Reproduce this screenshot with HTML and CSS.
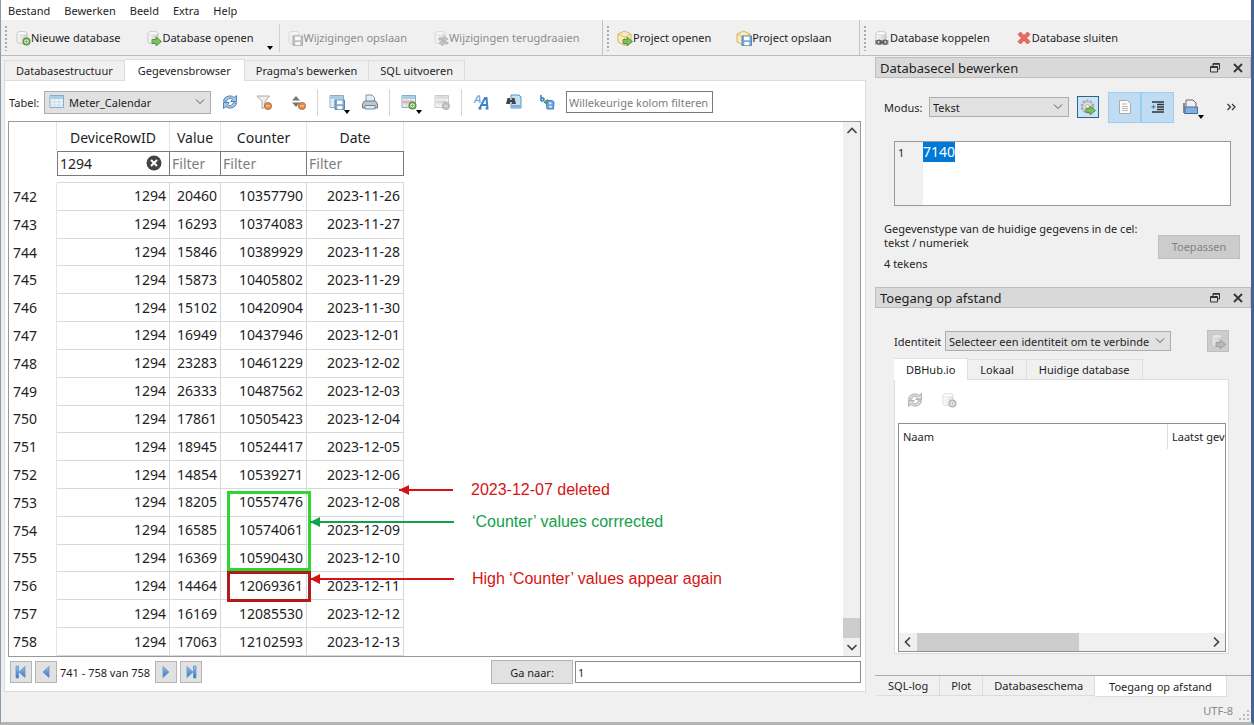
FILE: index.html
```html
<!DOCTYPE html>
<html lang="nl">
<head>
    <meta charset="UTF-8">
    <title>DB Browser for SQLite</title>
    <link rel="stylesheet" href="styles.css">
</head>
<body>
    <!-- icon sprite -->
    <svg class="sprite" aria-hidden="true">
        <defs>
            <linearGradient id="gBlue" x1="0" y1="0" x2="0" y2="1"><stop offset="0" stop-color="#9cc4ee"/><stop offset="1" stop-color="#2f6fc0"/></linearGradient>
            <linearGradient id="gCyl" x1="0" y1="0" x2="1" y2="0"><stop offset="0" stop-color="#fafafa"/><stop offset="1" stop-color="#cfcfcf"/></linearGradient>
        </defs>
        <symbol id="cyl" viewBox="0 0 16 16"><path d="M2 3.2C2 1 12 1 12 3.2V12c0 2.2-10 2.2-10 0z" fill="url(#gCyl)" stroke="#bdbdbd" stroke-width=".8"/><ellipse cx="7" cy="3.3" rx="4.8" ry="1.6" fill="#fff" stroke="#c8c8c8" stroke-width=".6"/></symbol>
        <symbol id="plus" viewBox="0 0 16 16"><circle cx="11.5" cy="11.5" r="3.2" fill="#eef7e8" stroke="#5b9a45" stroke-width="1.7"/><path d="M11.5 9.8v3.4M9.8 11.5h3.4" stroke="#7fb56a" stroke-width="1"/></symbol>
        <symbol id="arrow" viewBox="0 0 16 16"><path d="M6 9.5h4V7l5.5 4.5L10 16v-2.5H6z" fill="#7fc05e" stroke="#4c8f3a" stroke-width=".9"/></symbol>
        <symbol id="floppy" viewBox="0 0 16 16"><path d="M6 6h9.5v9.5H6z" fill="#7da7d4" stroke="#5d86b3"/><path d="M8 6.5h5.5v3.7H8zM8.3 12h5v3.3h-5z" fill="#fff"/></symbol>
        <symbol id="minus" viewBox="0 0 16 16"><circle cx="12" cy="12" r="3.6" fill="#e08a4c" stroke="#b3683a" stroke-width=".8"/><path d="M10 12h4" stroke="#fbd9bd"/></symbol>
        <symbol id="box" viewBox="0 0 16 16"><path d="M7.5 1l6.5 3v8l-6.5 3.5L1 12V4z" fill="#f8ecc0" stroke="#cfae55" stroke-width=".9"/><path d="M1 4l6.500 3L14 4M7.500 7v8.500" fill="none" stroke="#d8bc6a" stroke-width=".9"/></symbol>
        <symbol id="grid" viewBox="0 0 16 16"><path d="M1 1.500h13.500v12H1z" fill="#e9f4fa" stroke="#87acc4"/><path d="M1.500 2h12.500v3H1.500z" fill="#a9cde4"/><path d="M1 8h13M1 11h13M5.500 5v8.500M10 5v8.500" stroke="#c3dbe8" stroke-width=".8"/></symbol>
        <symbol id="refresh" viewBox="0 0 16 16"><path d="M1.500 7.200C1.800 2 9.500.3 12 3.600L14.500 1.500V7.500H8.800L10.500 5.300C8.500 3.500 5.500 4.300 4.800 7.200zM14.500 8.800C14.200 14 6.500 15.700 4 12.400L1.500 14.500V8.500H7.200L5.500 10.700C7.500 12.500 10.500 11.700 11.200 8.800z" fill="#a5c8ea" stroke="#4576a8" stroke-width=".9"/></symbol>
        <symbol id="gear" viewBox="0 0 16 16"><circle cx="7.500" cy="7.500" r="5.600" fill="none" stroke="#a6a6a6" stroke-width="2.600" stroke-dasharray="2.200 1.300"/><circle cx="7.500" cy="7.500" r="4.800" fill="#dedede" stroke="#aaa" stroke-width=".7"/><circle cx="7.500" cy="7.500" r="1.800" fill="#fff" stroke="#999" stroke-width=".7"/></symbol>
        <symbol id="first" viewBox="0 0 16 16"><path d="M3 2h2.500v12H3zM12 2.500v11L6 8z" fill="url(#gBlue)" stroke="#6794cc" stroke-width=".8"/></symbol>
        <symbol id="prev" viewBox="0 0 16 16"><path d="M11 2.500v11L5 8z" fill="url(#gBlue)" stroke="#6794cc" stroke-width=".8"/></symbol>
        <symbol id="float" viewBox="0 0 12 12"><path d="M4 1.500h6.500V7H8.500M4 1.500V4M1.500 4.500h7V10h-7z" fill="none" stroke="#333"/><path d="M4 2h6.500M1.500 5.200h7" stroke="#333" stroke-width="1.600"/></symbol>
        <symbol id="close" viewBox="0 0 12 12"><path d="M2 2l8 8M10 2l-8 8" stroke="#333" stroke-width="1.800"/></symbol>
        <symbol id="chev" viewBox="0 0 12 12"><path d="M8 1.500L3.500 6 8 10.500" fill="none" stroke="#444" stroke-width="1.700"/></symbol>
    </svg>

    <nav class="menubar">
        <a href="#">Bestand</a>
        <a href="#">Bewerken</a>
        <a href="#">Beeld</a>
        <a href="#">Extra</a>
        <a href="#">Help</a>
    </nav>

    <div class="toolbars">
        <div class="toolbar toolbar-db">
            <button class="new"><svg class="icon"><use href="#cyl"/><use href="#plus"/></svg>Nieuwe database</button>
            <button class="open"><svg class="icon"><use href="#cyl"/><use href="#arrow"/></svg>Database openen<i class="drop"></i></button>
            <button class="save" disabled><svg class="icon"><use href="#cyl"/><use href="#floppy"/></svg>Wijzigingen opslaan</button>
            <button disabled><svg class="icon"><use href="#cyl"/><path d="M6 8h5V6l4 3-4 3v-2H6zM15 12h-5v-2l-4 3 4 3v-2h5z" fill="#aaa" stroke="#777" stroke-width=".6"/></svg>Wijzigingen terugdraaien</button>
        </div>
        <div class="toolbar toolbar-project">
            <button><svg class="icon"><use href="#box"/><use href="#arrow"/></svg>Project openen</button>
            <button><svg class="icon"><use href="#box"/><use href="#floppy"/></svg>Project opslaan</button>
        </div>
        <div class="toolbar toolbar-attach">
            <button><svg class="icon"><use href="#cyl"/><path d="M1 10h13.500v4.500H1z" fill="#999"/><circle cx="5" cy="12.200" r="2" fill="#ddd" stroke="#555" stroke-width="1.200"/><circle cx="11" cy="12.200" r="2" fill="#ddd" stroke="#555" stroke-width="1.200"/><path d="M5 12.200h6" stroke="#555" stroke-width="1.200"/></svg>Database koppelen</button>
            <button><svg class="icon"><path d="M2 4.500L4.500 2 8 5.500 11.500 2 14 4.500 10.500 8 14 11.500 11.500 14 8 10.500 4.500 14 2 11.500 5.500 8z" fill="#e8685e" stroke="#d4564c" stroke-width=".8"/></svg>Database sluiten</button>
        </div>
    </div>

    <main class="workspace">
        <section class="browser">
            <div class="tabs">
                <button>Databasestructuur</button>
                <button class="active">Gegevensbrowser</button>
                <button>Pragma's bewerken</button>
                <button>SQL uitvoeren</button>
            </div>
            <div class="panel">
                <div class="table-tools">
                    <label for="tableName">Tabel:</label>
                    <span class="table-select">
                        <svg class="icon"><use href="#grid"/></svg>
                        <select id="tableName"><option>Meter_Calendar</option></select>
                    </span>
                    <div class="tool-group">
                        <button aria-label="Vernieuwen"><svg class="icon"><use href="#refresh"/></svg></button>
                        <button aria-label="Filters wissen"><svg class="icon"><path d="M1 2h12.500L9 7.500V13l-3 1.500v-7z" fill="#eee" stroke="#aaa"/><use href="#minus"/></svg></button>
                        <button aria-label="Sortering wissen"><svg class="icon"><path d="M2 6.500L6 2l4 4.500zM2 8.500L6 13l4-4.500z" fill="#777"/><use href="#minus"/></svg></button>
                    </div>
                    <div class="tool-group">
                        <button aria-label="Opslaan als"><svg class="icon"><use href="#grid"/><use href="#floppy"/></svg><i class="drop"></i></button>
                        <button aria-label="Afdrukken"><svg class="icon"><path d="M4 1h6l2.500 2.500V8H4z" fill="#e1eefb" stroke="#7396b9"/><path d="M2.500 7h11l2 3v4H.5v-4z" fill="#c4c4c4" stroke="#777"/><path d="M3 11.500h10V15H3z" fill="#dcecfb" stroke="#6c89a8"/></svg></button>
                    </div>
                    <div class="tool-group">
                        <button aria-label="Record toevoegen"><svg class="icon"><use href="#grid"/><path d="M2 6.500h11v3H2z" fill="#ebb0b0"/><use href="#plus"/></svg><i class="drop"></i></button>
                        <button aria-label="Record verwijderen" disabled><svg class="icon"><use href="#grid"/><path d="M2 6.500h11v3H2z" fill="#ebb0b0"/><use href="#minus"/></svg></button>
                    </div>
                    <div class="tool-group">
                        <button aria-label="Lettertype"><svg class="icon"><path d="M1 9l4-7h1.500L7 9M3 6.500h4" fill="none" stroke="#7baee0" stroke-width="1.500"/><path d="M6.500 14.500L12 4h1.500l1 10.500M8.500 11h6M5.500 14.500h3M12.500 14.500h3" fill="none" stroke="#3f82c4" stroke-width="2"/></svg></button>
                        <button aria-label="Zoeken"><svg class="icon"><path d="M5 1h8l2 2v11H5z" fill="#c5e0f3" stroke="#5d94c2"/><path d="M6 12h8" stroke="#7fb0da" stroke-width="2"/><path d="M1.500 4h2.500v2h2V4h2.500l1.500 6H6V8H4v2H0z" fill="#444"/></svg></button>
                        <button aria-label="Vervangen"><svg class="icon"><path d="M2 1v6M2 4.500c4-2 4 3 0 2.500M5 8l3 1.500" fill="none" stroke="#3a7ec4" stroke-width="1.600"/><path d="M7 6.500h6.500l1.500 1.500-.5 7H8z" fill="#6fa5da" stroke="#4680bd"/><path d="M10 8.500h2.500v1.800H10zM10 12h3v1.500h-3z" fill="#e3f0fb"/><path d="M5 7l4-2v4z" fill="#4aa04a"/></svg></button>
                    </div>
                    <input class="column-filter" type="text" placeholder="Willekeurige kolom filteren" aria-label="Willekeurige kolom filteren">
                </div>

                <div class="grid-frame">
                    <table class="data">
                        <colgroup><col class="c-num"><col class="c-device"><col class="c-value"><col class="c-counter"><col class="c-date"></colgroup>
                        <thead>
                            <tr><th></th><th>DeviceRowID</th><th>Value</th><th>Counter</th><th>Date</th></tr>
                            <tr class="filters">
                                <td></td>
                                <td><span class="filled"><input type="text" value="1294" aria-label="Filter DeviceRowID"><button aria-label="Wissen"><svg viewBox="0 0 16 16"><circle cx="8" cy="8" r="7.500" fill="#444"/><path d="M5 5l6 6M11 5l-6 6" stroke="#fff" stroke-width="2"/></svg></button></span></td>
                                <td><input type="text" placeholder="Filter" aria-label="Filter Value"></td>
                                <td><input type="text" placeholder="Filter" aria-label="Filter Counter"></td>
                                <td><input type="text" placeholder="Filter" aria-label="Filter Date"></td>
                            </tr>
                            <tr class="sliver"><td></td><td></td><td></td><td></td><td></td></tr>
                        </thead>
                        <tbody>
                            <tr><th>742</th><td>1294</td><td>20460</td><td>10357790</td><td>2023-11-26</td></tr>
                            <tr><th>743</th><td>1294</td><td>16293</td><td>10374083</td><td>2023-11-27</td></tr>
                            <tr><th>744</th><td>1294</td><td>15846</td><td>10389929</td><td>2023-11-28</td></tr>
                            <tr><th>745</th><td>1294</td><td>15873</td><td>10405802</td><td>2023-11-29</td></tr>
                            <tr><th>746</th><td>1294</td><td>15102</td><td>10420904</td><td>2023-11-30</td></tr>
                            <tr><th>747</th><td>1294</td><td>16949</td><td>10437946</td><td>2023-12-01</td></tr>
                            <tr><th>748</th><td>1294</td><td>23283</td><td>10461229</td><td>2023-12-02</td></tr>
                            <tr><th>749</th><td>1294</td><td>26333</td><td>10487562</td><td>2023-12-03</td></tr>
                            <tr><th>750</th><td>1294</td><td>17861</td><td>10505423</td><td>2023-12-04</td></tr>
                            <tr><th>751</th><td>1294</td><td>18945</td><td>10524417</td><td>2023-12-05</td></tr>
                            <tr><th>752</th><td>1294</td><td>14854</td><td>10539271</td><td>2023-12-06</td></tr>
                            <tr><th>753</th><td>1294</td><td>18205</td><td>10557476</td><td>2023-12-08</td></tr>
                            <tr><th>754</th><td>1294</td><td>16585</td><td>10574061</td><td>2023-12-09</td></tr>
                            <tr><th>755</th><td>1294</td><td>16369</td><td>10590430</td><td>2023-12-10</td></tr>
                            <tr><th>756</th><td>1294</td><td>14464</td><td>12069361</td><td>2023-12-11</td></tr>
                            <tr><th>757</th><td>1294</td><td>16169</td><td>12085530</td><td>2023-12-12</td></tr>
                            <tr><th>758</th><td>1294</td><td>17063</td><td>12102593</td><td>2023-12-13</td></tr>
                        </tbody>
                    </table>
                    <div class="vscroll">
                        <svg class="up"><use href="#chev"/></svg>
                        <div class="thumb"></div>
                        <svg class="down"><use href="#chev"/></svg>
                    </div>

                    <!-- annotations over the table -->
                    <div class="mark mark-green"></div>
                    <div class="mark mark-red"></div>
                    <div class="note note-deleted"><i></i>2023-12-07 deleted</div>
                    <div class="note note-corrected"><i></i>‘Counter’ values corrrected</div>
                    <div class="note note-again"><i></i>High ‘Counter’ values appear again</div>
                </div>

                <div class="pager">
                    <button aria-label="Eerste"><svg class="icon"><use href="#first"/></svg></button>
                    <button aria-label="Vorige"><svg class="icon"><use href="#prev"/></svg></button>
                    <span>741 - 758 van 758</span>
                    <button aria-label="Volgende"><svg class="icon flip"><use href="#prev"/></svg></button>
                    <button aria-label="Laatste"><svg class="icon flip"><use href="#first"/></svg></button>
                    <button class="goto">Ga naar:</button>
                    <input type="text" value="1" aria-label="Ga naar record">
                </div>
            </div>
        </section>

        <aside class="docks">
            <header class="dock-title">
                <h2>Databasecel bewerken</h2>
                <button aria-label="Losmaken"><svg><use href="#float"/></svg></button>
                <button aria-label="Sluiten"><svg><use href="#close"/></svg></button>
            </header>
            <section class="cell-editor">
                <div class="mode-row">
                    <label for="mode">Modus:</label>
                    <select id="mode"><option>Tekst</option></select>
                    <button class="auto" aria-label="Automatisch"><svg class="icon"><use href="#gear"/><use href="#arrow"/></svg></button>
                    <div class="toggles">
                        <button aria-label="Tekst"><svg class="icon"><path d="M2.500 1.500h8l3 3v10h-11z" fill="#fafafa" stroke="#aaa"/><path d="M5 5h5M5 7.500h6M5 9.500h6M5 11.500h6" stroke="#bbb"/></svg></button>
                        <button aria-label="Inspringen"><svg class="icon"><path d="M2 3h12M7 5.500h7M7 8h7M7 10.500h7M2 13h12" stroke="#333" stroke-width="1.400"/><path d="M1.500 7.800h4M3.500 5.800v4" stroke="#4682c4" stroke-width="1.200"/></svg></button>
                    </div>
                    <button class="import" aria-label="Importeren"><svg class="icon"><path d="M3 1h7l3 3v5H3z" fill="#f0f0f0" stroke="#666"/><path d="M1 4v10" stroke="#666" stroke-width="1.500"/><path d="M2.500 8h12v6.500h-13z" fill="#85aede" stroke="#3e6ba5"/></svg><i class="drop"></i></button>
                    <button class="more" aria-label="Meer"><svg class="icon"><path d="M3.500 5l3 3-3 3M8 5l3 3-3 3" fill="none" stroke="#333" stroke-width="1.200"/></svg></button>
                </div>
                <div class="editor">
                    <span class="gutter">1</span>
                    <textarea id="cell" aria-label="Celinhoud" spellcheck="false">7140</textarea>
                </div>
                <div class="cell-info">
                    <div>
                        <p>Gegevenstype van de huidige gegevens in de cel: tekst / numeriek</p>
                        <p>4 tekens</p>
                    </div>
                    <button disabled>Toepassen</button>
                </div>
            </section>

            <header class="dock-title">
                <h2>Toegang op afstand</h2>
                <button aria-label="Losmaken"><svg><use href="#float"/></svg></button>
                <button aria-label="Sluiten"><svg><use href="#close"/></svg></button>
            </header>
            <section class="remote">
                <div class="identity-row">
                    <label for="identity">Identiteit</label>
                    <select id="identity"><option>Selecteer een identiteit om te verbinde</option></select>
                    <button disabled aria-label="Uploaden"><svg class="icon"><use href="#cyl"/><use href="#arrow"/></svg></button>
                </div>
                <div class="tabs">
                    <button class="active">DBHub.io</button>
                    <button>Lokaal</button>
                    <button>Huidige database</button>
                </div>
                <div class="remote-panel">
                    <div class="remote-tools">
                        <button disabled aria-label="Vernieuwen"><svg class="icon"><use href="#refresh"/></svg></button>
                        <button disabled aria-label="Klonen"><svg class="icon"><use href="#cyl"/><use href="#plus"/></svg></button>
                    </div>
                    <div class="remote-list">
                        <table>
                            <thead><tr><th>Naam</th><th class="modified">Laatst gev</th></tr></thead>
                        </table>
                        <div class="hscroll">
                            <svg><use href="#chev"/></svg>
                            <div class="track"><div class="thumb"></div></div>
                            <svg class="flip"><use href="#chev"/></svg>
                        </div>
                    </div>
                </div>
            </section>
            <div class="dock-tabs">
                <button>SQL-log</button>
                <button>Plot</button>
                <button>Databaseschema</button>
                <button class="active">Toegang op afstand</button>
            </div>
        </aside>
    </main>

    <footer class="statusbar">
        <span>UTF-8</span>
        <svg class="grip" viewBox="0 0 10 10"><path d="M8 0h2v2H8zM4 4h2v2H4zM8 4h2v2H8zM0 8h2v2H0zM4 8h2v2H4zM8 8h2v2H8z" fill="#bbb"/></svg>
    </footer>

    <script>
        const cell = document.getElementById('cell');
        cell.focus();
        cell.select();
    </script>
</body>
</html>
```
FILE: styles.css
```css
* {
    box-sizing: border-box;
}

body {
    margin: 0;
    height: 100vh;
    display: flex;
    flex-direction: column;
    overflow: hidden;
    background: #f0f0f0;
    border-left: 1px solid #8a9bb0;
    border-right: 3px solid #46648c;
    border-bottom: 3px solid #b4b4b4;
    font-family: "Noto Sans", "Liberation Sans", sans-serif;
    font-size: 11px;
    color: #1e1e1e;
}

button, input, select, textarea {
    font: inherit;
    color: inherit;
    margin: 0;
    padding: 0;
    border: 0;
    border-radius: 0;
    outline: none;
    background: none;
}

h2, p {
    margin: 0;
    font-weight: normal;
}

th {
    font-weight: normal;
}

.sprite {
    position: absolute;
    width: 0;
    height: 0;
}

.icon {
    width: 16px;
    height: 16px;
    flex: none;
    display: block;
}

button:disabled .icon {
    filter: grayscale(1);
    opacity: 0.6;
}

.flip {
    transform: scaleX(-1);
}

/* small black triangle at a button's corner */
.drop {
    position: absolute;
    right: -5px;
    bottom: -4px;
    border: 3px solid transparent;
    border-top: 4px solid #000;
    border-bottom: 0;
}

select {
    appearance: none;
    border: 1px solid #adadad;
    background: #e1e1e1 url("data:image/svg+xml,%3Csvg xmlns='http://www.w3.org/2000/svg' width='10' height='6'%3E%3Cpath d='M1 .5l4 4 4-4' fill='none' stroke='%23555'/%3E%3C/svg%3E") no-repeat right 5px center;
}

/* menu and toolbars */
.menubar {
    display: flex;
    gap: 14px;
    height: 20px;
    padding-left: 7px;
    background: #fff;
    line-height: 21px;
}

.menubar a {
    color: inherit;
    text-decoration: none;
}

.toolbars {
    display: flex;
    height: 36px;
    border-bottom: 1px solid #bcbcbc;
}

.toolbar {
    display: flex;
    align-items: center;
    gap: 26px;
    padding-left: 14px;
    border-right: 1px solid #c4c4c4;
    background-image: linear-gradient(#f0f0f0 50%, transparent 50%), linear-gradient(#aaa, #aaa);
    background-size: 2px 4px, 2px 27px;
    background-position: 4px 4px;
    background-repeat: repeat-y, no-repeat;
}

.toolbar-db {
    width: 602px;
}

.toolbar-project {
    width: 257px;
    gap: 25px;
}

.toolbar-attach {
    flex: 1;
    border-right: 0;
}

.toolbar button {
    position: relative;
    display: flex;
    align-items: center;
    height: 28px;
    white-space: nowrap;
}

.toolbar button:disabled {
    color: #8c8c8c;
}

.toolbar .open {
    padding-right: 20px;
}

.toolbar .open .drop {
    right: 0;
    bottom: 2px;
}

.toolbar .save {
    margin-left: -20px;
    padding-left: 7px;
    border-left: 1px solid #cfcfcf;
}

/* main area */
.workspace {
    flex: 1;
    min-height: 0;
    display: grid;
    grid-template-columns: minmax(0, 1fr) 376px;
    gap: 9px;
}

.browser {
    display: flex;
    flex-direction: column;
    padding: 2px 0 0 3px;
}

.tabs {
    display: flex;
    align-items: flex-end;
    height: 22px;
}

.tabs button {
    height: 20px;
    padding: 0 11px;
    border: 1px solid #dcdcdc;
    border-left: 0;
    border-bottom: 0;
    white-space: nowrap;
}

.tabs .active {
    height: 22px;
    margin-bottom: -1px;
    padding: 0 13px;
    background: #fff;
    position: relative;
}

.browser .tabs button:first-child {
    border-left: 1px solid #dcdcdc;
}

.panel {
    flex: 1;
    min-height: 0;
    display: flex;
    flex-direction: column;
    border: 1px solid #dcdcdc;
    background: #fff;
    padding: 0 4px 7px 3px;
}

.table-tools {
    display: flex;
    align-items: center;
    height: 40px;
    padding-top: 2px;
    padding-left: 1px;
}

.table-tools label {
    width: 35px;
}

.table-select {
    position: relative;
    width: 167px;
}

.table-select select {
    width: 100%;
    height: 23px;
    padding-left: 24px;
}

.table-select .icon {
    position: absolute;
    left: 5px;
    top: 3px;
}

.tool-group {
    display: flex;
    gap: 18px;
    padding: 0 11px;
    height: 27px;
    align-items: center;
}

.tool-group + .tool-group {
    border-left: 1px solid #d4d4d4;
    gap: 17px;
}

.tool-group button {
    position: relative;
}

.column-filter {
    width: 147px;
    height: 22px;
    padding: 0 2px;
    border: 1px solid #7a7a7a;
}

input::placeholder {
    color: #7d7d7d;
    opacity: 1;
}

/* data grid */
.grid-frame {
    flex: 1;
    min-height: 0;
    position: relative;
    display: flex;
    justify-content: space-between;
    border: 1px solid #999;
    font-size: 14px;
}

.data {
    width: 395px;
    height: 100%;
    table-layout: fixed;
    border-collapse: separate;
    border-spacing: 0;
}

.c-num {
    width: 48px;
}

.c-device {
    width: 113px;
}

.c-value {
    width: 51px;
}

.c-counter {
    width: 86px;
}

.c-date {
    width: 97px;
}

.data th, .data td {
    padding: 0 3px;
    line-height: 18px;
}

.data thead th {
    height: 29px;
    padding-top: 3px;
    border-right: 1px solid #e4e4e4;
}

.data .filters td {
    height: 25px;
    padding: 0;
}

.filters input {
    display: block;
    width: 100%;
    height: 25px;
    padding: 0 2px;
    border: 1px solid #7a7a7a;
    border-left-width: 0;
}

.filters .filled {
    position: relative;
    display: block;
}

.filled input {
    border-left-width: 1px;
}

.filled button {
    position: absolute;
    right: 8px;
    top: 4px;
    width: 16px;
    height: 16px;
}

.filled svg {
    display: block;
}

.data .sliver td {
    height: 7px;
    border-bottom: 1px solid #d8d8d8;
    line-height: 0;
}

.data .sliver td:first-child {
    border-bottom: 0;
}

.data tbody th {
    text-align: left;
    padding-left: 4px;
    border-right: 1px solid #e4e4e4;
}

.data tbody td {
    text-align: right;
    border-right: 1px solid #d8d8d8;
    border-bottom: 1px solid #d8d8d8;
}

.vscroll {
    width: 17px;
    display: flex;
    flex-direction: column;
    align-items: center;
    background: #f0f0f0;
}

.vscroll svg {
    width: 12px;
    height: 12px;
}

.vscroll .up {
    transform: rotate(90deg);
    margin: 3px 0 auto;
}

.vscroll .down {
    transform: rotate(-90deg);
    margin: 3px 0;
}

.vscroll .thumb {
    width: 100%;
    height: 20px;
    background: #cdcdcd;
}

.mark {
    position: absolute;
    left: 218px;
    width: 84px;
    border: 3px solid #2fd62f;
}

.mark-green {
    top: 369px;
    height: 80px;
}

.mark-red {
    top: 449px;
    height: 31px;
    border-color: #b01c1c;
}

.note {
    position: absolute;
    display: flex;
    align-items: center;
    height: 18px;
    font-family: "Liberation Sans", Arial, sans-serif;
    font-size: 16px;
    white-space: nowrap;
}

.note i {
    position: relative;
    height: 2px;
    margin-right: 18px;
    background: currentColor;
}

.note i::before {
    content: "";
    position: absolute;
    left: 0;
    top: -4px;
    border: 5px solid transparent;
    border-right: 10px solid currentColor;
    border-left: 0;
}

.note-deleted {
    left: 390px;
    top: 359px;
    color: #d41414;
}

.note-deleted i {
    width: 54px;
}

.note-corrected {
    left: 301px;
    top: 391px;
    color: #12a14b;
}

.note-corrected i, .note-again i {
    width: 144px;
}

.note-again {
    left: 301px;
    top: 448px;
    color: #d41414;
}

.pager {
    display: flex;
    align-items: center;
    padding-top: 3px;
    padding-left: 2px;
}

.pager button {
    display: flex;
    align-items: center;
    justify-content: center;
    width: 22px;
    height: 22px;
    margin-right: 3px;
    border: 1px solid #b4b4b4;
    background: #e1e1e1;
}

.pager span {
    width: 95px;
}

.pager .goto {
    width: 82px;
    height: 24px;
    margin-left: auto;
    margin-right: 2px;
}

.pager input {
    width: 286px;
    height: 22px;
    padding: 0 2px;
    border: 1px solid #8a8a8a;
}

/* docks on the right */
.docks {
    display: flex;
    flex-direction: column;
    min-width: 0;
}

.dock-title {
    display: flex;
    align-items: center;
    gap: 11px;
    height: 21px;
    margin-top: 1px;
    padding: 0 6px 0 4px;
    border: 1px solid #bebebe;
    background: #d9d9d9;
}

.dock-title h2 {
    flex: 1;
    font-size: 13px;
}

.dock-title svg {
    display: block;
    width: 12px;
    height: 12px;
}

.cell-editor {
    height: 208px;
    padding: 12px 11px 0 9px;
}

.mode-row {
    display: flex;
    align-items: center;
    height: 34px;
}

.mode-row label {
    width: 45px;
}

.mode-row select {
    width: 140px;
    height: 20px;
    padding-left: 3px;
    margin-right: 8px;
}

.auto {
    padding: 2px;
    border: 1px solid #2c628b;
    background: #cce4f7;
}

.toggles {
    display: flex;
    margin: 0 9px;
}

.toggles button {
    width: 33px;
    height: 31px;
    padding: 0 8px;
    border: 1px solid #99cdf3;
    background: #c0dcf3;
}

.import {
    position: relative;
}

.more {
    margin-left: auto;
}

.editor {
    display: flex;
    height: 65px;
    margin: 17px 9px 0 10px;
    border: 1px solid #999;
    background: #fff;
    font-size: 14px;
}

.gutter {
    width: 28px;
    padding: 3px 3px;
    background: #f0f0f0;
    font-size: 11px;
}

.editor textarea {
    flex: 1;
    min-width: 0;
    resize: none;
    line-height: 20px;
}

textarea::selection {
    background: #0078d7;
    color: #fff;
}

.cell-info {
    display: flex;
    align-items: center;
    justify-content: space-between;
    padding-top: 16px;
    line-height: 14px;
}

.cell-info div {
    width: 268px;
}

.cell-info p + p {
    margin-top: 7px;
}

.cell-info button {
    width: 82px;
    height: 24px;
    border: 1px solid #bfbfbf;
    background: #cccccc;
    color: #838383;
}

.remote {
    flex: 1;
    min-height: 0;
    display: flex;
    flex-direction: column;
    padding: 22px 22px 0 19px;
}

.identity-row {
    display: flex;
    align-items: center;
}

.identity-row label {
    width: 51px;
}

.identity-row select {
    width: 226px;
    height: 20px;
    padding-left: 3px;
}

.identity-row button {
    margin-left: auto;
    padding: 2px;
    border: 1px solid #bfbfbf;
    background: #cccccc;
}

.remote .tabs {
    margin-top: 5px;
}

.remote .tabs button {
    padding: 0 12px;
    border-color: #e0e0e0;
}

.remote-panel {
    flex: 1;
    min-height: 0;
    display: flex;
    flex-direction: column;
    padding: 0 2px 1px 3px;
    border: 1px solid #dcdcdc;
    background: #fff;
}

.remote-tools {
    display: flex;
    gap: 18px;
    padding: 12px 9px 15px;
}

.remote-list {
    flex: 1;
    display: flex;
    flex-direction: column;
    justify-content: space-between;
    border: 1px solid #8f8f8f;
    overflow: hidden;
}

.remote-list table {
    width: 100%;
    border-spacing: 0;
    table-layout: fixed;
}

.remote-list th {
    height: 25px;
    padding: 0 4px;
    text-align: left;
    white-space: nowrap;
}

.remote-list .modified {
    width: 58px;
    padding-right: 0;
    border-left: 1px solid #dcdcdc;
}

.hscroll {
    display: flex;
    align-items: center;
    height: 18px;
    background: #f0f0f0;
}

.hscroll svg {
    width: 12px;
    height: 12px;
    margin: 0 3px;
}

.hscroll .track {
    flex: 1;
    height: 100%;
}

.hscroll .thumb {
    width: 56%;
    height: 100%;
    background: #cdcdcd;
}

.dock-tabs {
    display: flex;
    align-items: flex-start;
    height: 22px;
    margin: 21px 0 -5px;
    padding-left: 2px;
    border-top: 1px solid #aaa;
}

.dock-tabs button {
    height: 20px;
    padding: 0 11px;
    border: 1px solid #dcdcdc;
    border-top: 0;
    border-left: 0;
    white-space: nowrap;
}

.dock-tabs .active {
    height: 21px;
    padding: 0 14px;
    background: #fff;
}

.statusbar {
    display: flex;
    align-items: center;
    justify-content: flex-end;
    height: 30px;
    gap: 6px;
    padding: 6px 2px 0 0;
    color: #888;
}

.grip {
    width: 10px;
    height: 10px;
    margin-top: 10px;
}
```
